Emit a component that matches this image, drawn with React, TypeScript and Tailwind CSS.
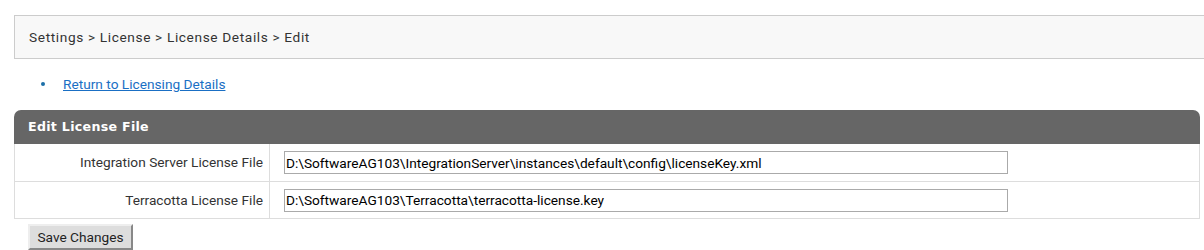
import React from "react";

export default function App() {
  return (
    <div className="w-[1204px] h-[250px] bg-white overflow-hidden font-['Roboto',sans-serif] text-[13.7px] text-[#333]">
      <div className="pt-[15px] pl-[14px]">
        <div className="h-[44px] border border-r-0 border-[#cccccc] bg-[#f8f8f8] flex items-center pl-[14px] tracking-[0.62px] text-[#333]">
          Settings &gt; License &gt; License Details &gt; Edit
        </div>
      </div>
      <ul className="mt-[16px] pl-[41px] h-[18px] flex items-center">
        <li className="flex items-center">
          <span className="w-[4px] h-[4px] rounded-full bg-[#1c6fa8] mr-[18px]" />
          <a href="#" className="text-[#1a6fc4] underline">
            Return to Licensing Details
          </a>
        </li>
      </ul>
      <div className="mt-[17px] ml-[14px] w-[1186px]">
        <div className="h-[34px] bg-[#666666] rounded-t-[7px] flex items-center pl-[14px] text-white font-bold font-['DejaVu_Sans',sans-serif] text-[12.6px] tracking-[0.3px]">
          Edit License File
        </div>
        <div className="border border-t-0 border-[#dddddd]">
          <div className="flex h-[38px] border-b border-[#dddddd]">
            <div className="w-[255px] border-r border-[#dddddd] flex items-center justify-end pr-[6px] text-[#333]">
              Integration Server License File
            </div>
            <div className="flex items-center pl-[14px]">
              <input
                readOnly
                value="D:\SoftwareAG103\IntegrationServer\instances\default\config\licenseKey.xml"
                className="w-[724px] h-[23px] border border-[#aaaaaa] px-[1px] text-[13.7px] text-black outline-none font-['Roboto',sans-serif]"
              />
            </div>
          </div>
          <div className="flex h-[36px]">
            <div className="w-[255px] border-r border-[#dddddd] flex items-center justify-end pr-[6px] text-[#333]">
              Terracotta License File
            </div>
            <div className="flex items-center pl-[14px]">
              <input
                readOnly
                value="D:\SoftwareAG103\Terracotta\terracotta-license.key"
                className="w-[724px] h-[23px] border border-[#aaaaaa] px-[1px] text-[13.7px] text-black outline-none font-['Roboto',sans-serif]"
              />
            </div>
          </div>
        </div>
        <div className="mt-[5px] pl-[14px]">
          <button className="h-[26px] w-[105px] bg-[#dddddd] border-2 border-t-[#eeeeee] border-l-[#eeeeee] border-r-[#888888] border-b-[#888888] text-[13.7px] text-[#222] font-['Roboto',sans-serif]">
            Save Changes
          </button>
        </div>
      </div>
    </div>
  );
}
